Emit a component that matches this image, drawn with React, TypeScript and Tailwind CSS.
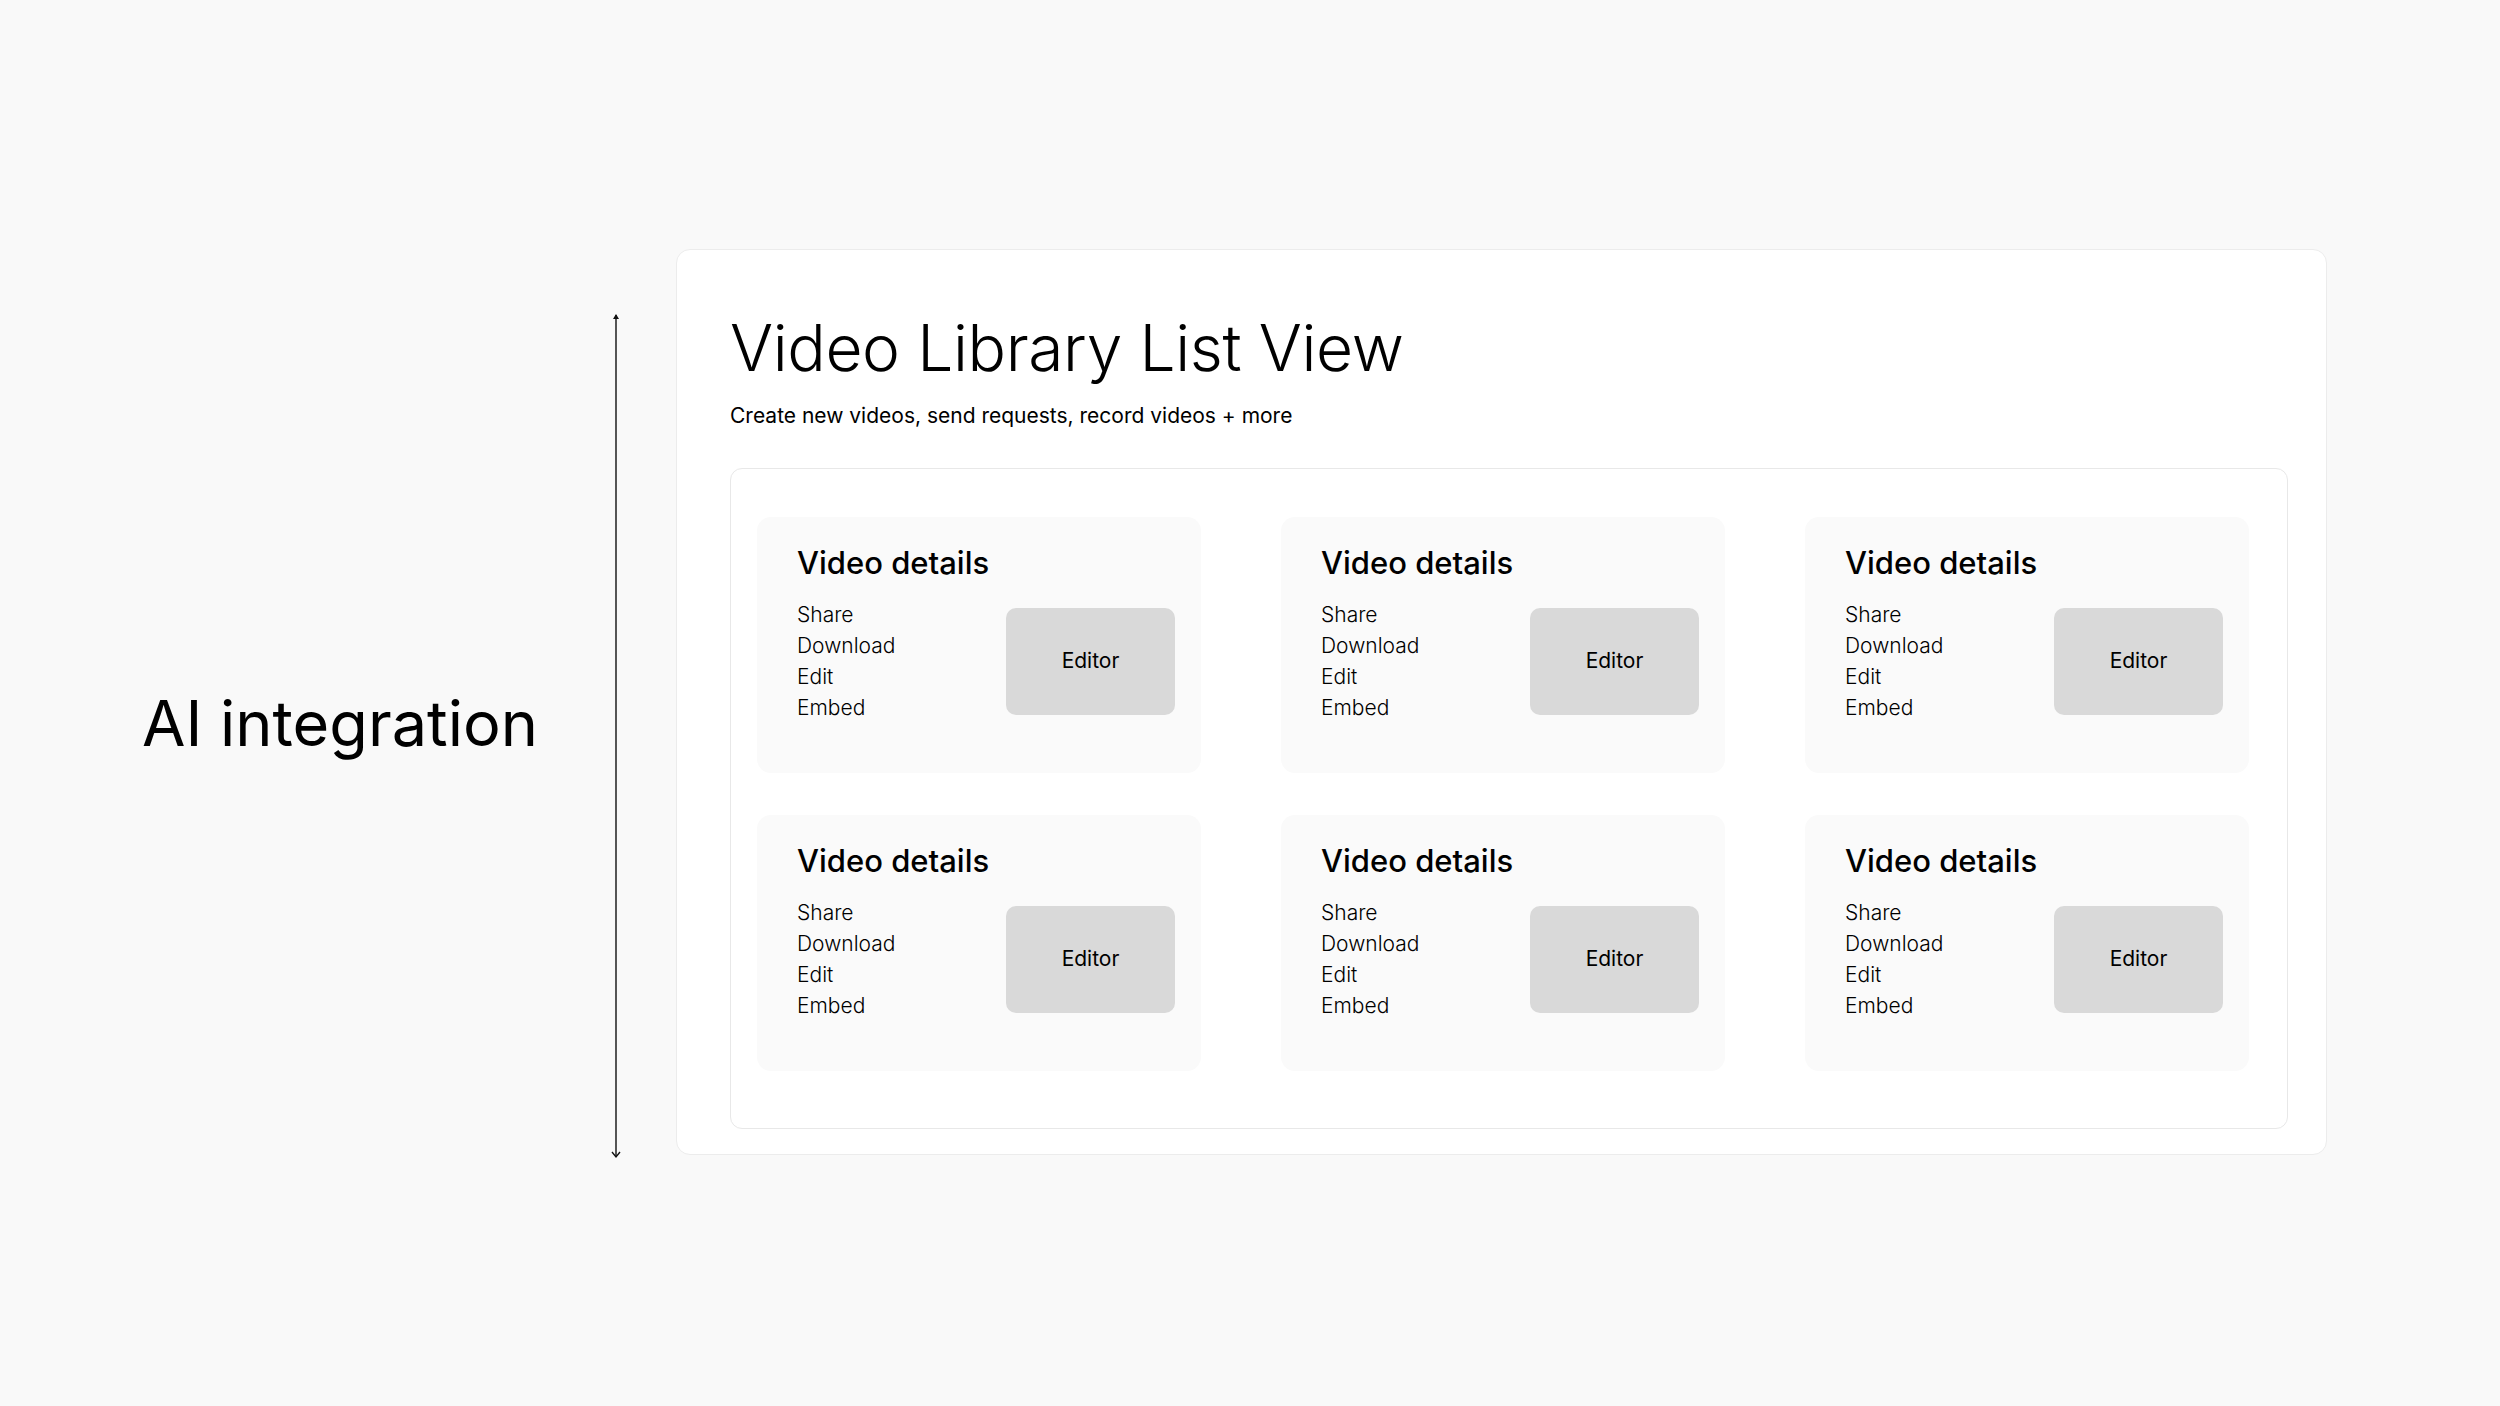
import React from "react";

const actions = ["Share", "Download", "Edit", "Embed"];

function VideoCard() {
  return (
    <div className="h-[256px] rounded-[14px] bg-[#fafafa] pl-[40px] pr-[26px] pt-[28px]">
      <h3 className="text-[31px] font-medium leading-[36px] text-black">Video details</h3>
      <div className="mt-[18px] flex items-center justify-between">
        <ul className="text-[21px] font-light leading-[31px] text-black">
          {actions.map((a) => (
            <li key={a}>{a}</li>
          ))}
        </ul>
        <button className="flex h-[107px] w-[169px] items-center justify-center rounded-[10px] bg-[#d9d9d9] text-[21px] text-black">
          Editor
        </button>
      </div>
    </div>
  );
}

export default function App() {
  return (
    <div
      className="flex h-[1406px] w-full items-start bg-[#f9f9f9] pl-[142px] pt-[249px]"
      style={{ fontFamily: "Inter, 'Noto Sans', sans-serif" }}
    >
      {/* side label */}
      <div className="w-[468px] pt-[443px]">
        <p className="text-[63px] leading-none text-black">AI integration</p>
      </div>

      {/* span arrow */}
      <svg className="mt-[64px] shrink-0" width="12" height="846" viewBox="0 0 12 846">
        <line x1="6" y1="2" x2="6" y2="843" stroke="#111" strokeWidth="1.4" />
        <path d="M3 6 L6 1 L9 6 Z" fill="#111" />
        <path d="M2 839 L6 844 L10 839" fill="none" stroke="#111" strokeWidth="1.4" />
      </svg>

      {/* main frame */}
      <div className="ml-[54px] flex h-[906px] w-[1651px] flex-col rounded-[14px] border border-[#ececec] bg-white pl-[53px] pr-[38px] pt-[66px]">
        <h1 className="text-[64px] font-light leading-none tracking-[-0.006em] text-black">
          Video Library List View
        </h1>
        <p className="mt-[22px] text-[21px] leading-[28px] text-black">
          Create new videos, send requests, record videos + more
        </p>

        <div className="mt-[38px] h-[661px] rounded-[12px] border border-[#e8e8e8] pl-[26px] pt-[48px]">
          <div className="grid grid-cols-[444px_444px_444px] gap-x-[80px] gap-y-[42px]">
            {Array.from({ length: 6 }).map((_, i) => (
              <VideoCard key={i} />
            ))}
          </div>
        </div>
      </div>
    </div>
  );
}
